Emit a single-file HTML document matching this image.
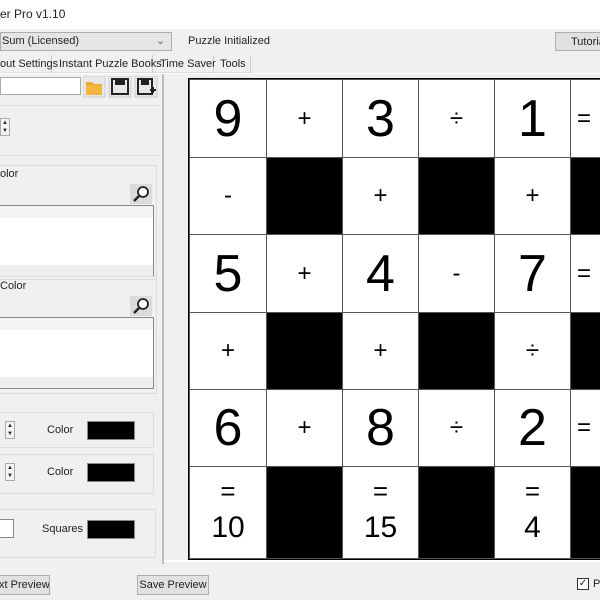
<!DOCTYPE html>
<html><head><style>
*{margin:0;padding:0;box-sizing:border-box}
body{width:600px;height:600px;overflow:hidden;background:#f0f0f0;font-family:"Liberation Sans",sans-serif;font-size:11px;color:#222;position:relative;white-space:nowrap}
.a{position:absolute}
.btn{position:absolute;background:#e1e1e1;border:1px solid #adadad;text-align:center;line-height:18px;font-size:11px;overflow:hidden}
.grp{position:absolute;border:1px solid #dcdcdc;border-left:none;}
.sw{position:absolute;background:#000;border:1px solid #888;width:48px;height:19px}
.spin{position:absolute;width:10px;height:18px;border:1px solid #aaa;background:#f4f4f4;font-size:6px;line-height:8px;text-align:center}
.c{position:absolute;background:#fff;border:1px solid #555;display:flex;align-items:center;justify-content:center;color:#000}
.k{background:#000}
.big{font-size:52px}
.op{font-size:24px}
</style></head><body>
<div class="a" style="left:0;top:0;width:600px;height:29px;background:#fff"></div>
<div class="a" style="left:0;top:7px;font-size:12px">er Pro v1.10</div>
<div class="a" style="left:0;top:32px;width:172px;height:19px;border:1px solid #adadad;background:#e5e5e5;padding-left:1px;line-height:17px">Sum (Licensed)<span style="position:absolute;right:6px;color:#666">&#8964;</span></div>
<div class="a" style="left:188px;top:35px">Puzzle Initialized</div>
<div class="btn" style="left:555px;top:32px;width:50px;height:19px;text-align:left;padding-left:15px">Tutorial</div>
<div class="a" style="left:0;top:55px;width:250px;height:18px;border-bottom:1px solid #ddd"></div>
<div class="a" style="left:0;top:55px;width:52px;height:18px;border-right:1px solid #ccc;line-height:18px">out Settings</div>
<div class="a" style="left:55px;top:55px;width:98px;height:18px;border-right:1px solid #ccc;line-height:18px;padding-left:4px">Instant Puzzle Books</div>
<div class="a" style="left:157px;top:55px;width:57px;height:18px;border-right:1px solid #ccc;line-height:18px;padding-left:3px">Time Saver</div>
<div class="a" style="left:215px;top:55px;width:36px;height:18px;border-right:1px solid #ccc;line-height:18px;padding-left:5px">Tools</div>
<div class="a" style="left:0;top:73px;width:600px;height:1px;background:#fff"></div>
<div class="a" style="left:0;top:77px;width:81px;height:18px;background:#fff;border:1px solid #aaa"></div>
<svg class="a" style="left:83px;top:76px" width="76" height="22">
<rect x="0" y="0" width="22" height="21" fill="#e8e8e8" stroke="#ccc"/>
<path d="M3 6h6l2 2h8v11H3z" fill="#f0a830"/><path d="M3 9h16v10H3z" fill="#f5b640"/>
<rect x="26" y="0" width="22" height="21" fill="#e8e8e8" stroke="#ccc"/>
<rect x="29" y="3" width="16" height="15" fill="none" stroke="#222" stroke-width="2"/><rect x="32" y="4" width="10" height="5" fill="#222"/>
<rect x="52" y="0" width="22" height="21" fill="#e8e8e8" stroke="#ccc"/>
<rect x="55" y="3" width="14" height="15" fill="none" stroke="#222" stroke-width="2"/><rect x="58" y="4" width="8" height="5" fill="#222"/><path d="M67 14h6M70 11v6" stroke="#222" stroke-width="2"/>
</svg>
<div class="a" style="left:0;top:105px;width:160px;height:1px;background:#ddd"></div>
<div class="spin" style="left:0;top:118px">▲<br>▼</div>
<div class="a" style="left:0;top:155px;width:160px;height:1px;background:#ddd"></div>
<div class="grp" style="left:0;top:165px;width:157px;height:115px"></div>
<div class="a" style="left:0;top:168px">olor</div>
<svg class="a" style="left:130px;top:184px" width="22" height="20"><rect width="22" height="20" fill="#d8dcdc"/><circle cx="13" cy="8" r="5" fill="#fff" stroke="#222" stroke-width="1.8"/><path d="M9 12l-5 5" stroke="#222" stroke-width="2.5"/></svg>
<div class="a" style="left:0;top:205px;width:154px;height:72px;background:#fff;border:1px solid #888;border-left:none"><div style="position:absolute;bottom:0;left:0;right:0;height:11px;background:#eee"></div><div style="position:absolute;top:0;left:0;right:0;height:12px;background:#f4f4f4"></div></div>
<div class="grp" style="left:0;top:276px;width:157px;height:118px"></div>
<div class="a" style="left:0;top:280px">Color</div>
<svg class="a" style="left:130px;top:296px" width="22" height="20"><rect width="22" height="20" fill="#d8dcdc"/><circle cx="13" cy="8" r="5" fill="#fff" stroke="#222" stroke-width="1.8"/><path d="M9 12l-5 5" stroke="#222" stroke-width="2.5"/></svg>
<div class="a" style="left:0;top:317px;width:154px;height:72px;background:#fff;border:1px solid #888;border-left:none"><div style="position:absolute;bottom:0;left:0;right:0;height:11px;background:#eee"></div><div style="position:absolute;top:0;left:0;right:0;height:12px;background:#f4f4f4"></div></div>
<div class="grp" style="left:0;top:412px;width:154px;height:36px"></div>
<div class="spin" style="left:5px;top:421px">▲<br>▼</div>
<div class="a" style="left:47px;top:424px">Color</div>
<div class="sw" style="left:87px;top:421px"></div>
<div class="grp" style="left:0;top:454px;width:154px;height:40px"></div>
<div class="spin" style="left:5px;top:463px">▲<br>▼</div>
<div class="a" style="left:47px;top:466px">Color</div>
<div class="sw" style="left:87px;top:463px"></div>
<div class="grp" style="left:0;top:509px;width:156px;height:49px"></div>
<div class="a" style="left:0;top:519px;width:14px;height:19px;background:#fff;border:1px solid #888;border-left:none"></div>
<div class="a" style="left:42px;top:523px">Squares</div>
<div class="sw" style="left:87px;top:520px"></div>
<div class="btn" style="left:-2px;top:575px;width:52px;height:20px;text-align:right;padding-right:6px">xt Preview</div>
<div class="btn" style="left:137px;top:575px;width:72px;height:20px">Save Preview</div>
<div class="a" style="left:577px;top:578px;width:12px;height:12px;border:1px solid #333;background:#fff;font-size:10px;line-height:10px;text-align:center">✓</div>
<div class="a" style="left:593px;top:578px">P</div>
<div class="a" style="left:162px;top:74px;width:2px;height:490px;background:#bbb"></div>
<div class="a" style="left:164px;top:74px;width:436px;height:488px;background:#f0f0f0;border-bottom:2px solid #fff"></div>
<div class="a" style="left:188px;top:78px;width:420px;height:482px;background:#fff;border:1px solid #000"></div>
<div id="g"></div>
<script>
var xs=[189,266,342,418,494,570,646],ys=[79,157,234,312,389,466,558];
var d=[["9","+","3","÷","1","="],["-","#","+","#","+","#"],["5","+","4","-","7","="],["+","#","+","#","÷","#"],["6","+","8","÷","2","="],["=|10","#","=|15","#","=|4","#"]];
var h="";
for(var r=0;r<6;r++)for(var c=0;c<6;c++){var v=d[r][c],st="left:"+xs[c]+"px;top:"+ys[r]+"px;width:"+(xs[c+1]-xs[c]+1)+"px;height:"+(ys[r+1]-ys[r]+1)+"px;";
if(c==5&&v=="=")st+="justify-content:flex-start;padding-left:6px;";
if(v=="#")h+='<div class="c k" style="'+st+'"></div>';
else if(v.indexOf("|")>0){var p=v.split("|");h+='<div class="c" style="'+st+'flex-direction:column"><div style="font-size:26px;line-height:30px">'+p[0]+'</div><div style="font-size:30px;line-height:44px">'+p[1]+'</div></div>';}
else h+='<div class="c '+(/\d/.test(v)?"big":"op")+'" style="'+st+'">'+v+'</div>';}
document.getElementById("g").innerHTML=h;
</script>
</body></html>
